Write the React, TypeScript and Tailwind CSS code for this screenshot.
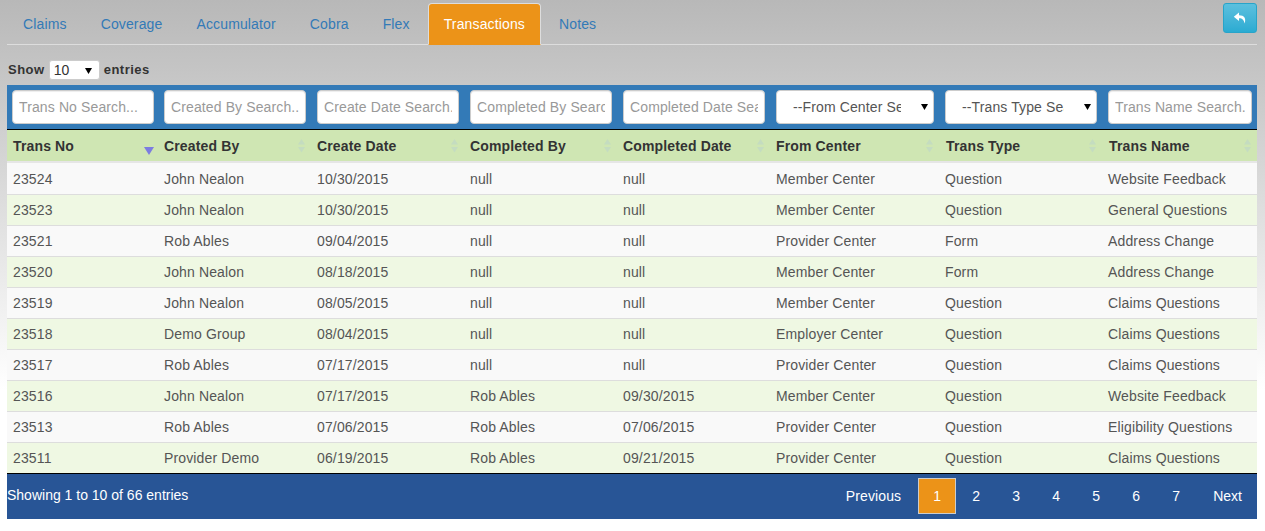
const columns = [
  { label: "Trans No", width: 151 },
  { label: "Created By", width: 153 },
  { label: "Create Date", width: 153 },
  { label: "Completed By", width: 153 },
  { label: "Completed Date", width: 153 },
  { label: "From Center", width: 169 },
  { label: "Trans Type", width: 163 },
  { label: "Trans Name", width: 155 },
];

const rows = [
  ["23524", "John Nealon", "10/30/2015", "null", "null", "Member Center", "Question", "Website Feedback"],
  ["23523", "John Nealon", "10/30/2015", "null", "null", "Member Center", "Question", "General Questions"],
  ["23521", "Rob Ables", "09/04/2015", "null", "null", "Provider Center", "Form", "Address Change"],
  ["23520", "John Nealon", "08/18/2015", "null", "null", "Member Center", "Form", "Address Change"],
  ["23519", "John Nealon", "08/05/2015", "null", "null", "Member Center", "Question", "Claims Questions"],
  ["23518", "Demo Group", "08/04/2015", "null", "null", "Employer Center", "Question", "Claims Questions"],
  ["23517", "Rob Ables", "07/17/2015", "null", "null", "Provider Center", "Question", "Claims Questions"],
  ["23516", "John Nealon", "07/17/2015", "Rob Ables", "09/30/2015", "Member Center", "Question", "Website Feedback"],
  ["23513", "Rob Ables", "07/06/2015", "Rob Ables", "07/06/2015", "Provider Center", "Question", "Eligibility Questions"],
  ["23511", "Provider Demo", "06/19/2015", "Rob Ables", "09/21/2015", "Provider Center", "Question", "Claims Questions"],
];

const tabs = ["Claims", "Coverage", "Accumulator", "Cobra", "Flex", "Transactions", "Notes"];

function Arrow({ className }: { className: string }) {
  return (
    <svg viewBox="0 0 7 6" className={className} aria-hidden="true">
      <path d="M0 0H7L3.5 6Z" fill="currentColor" />
    </svg>
  );
}

function SortIcon({ active }: { active: boolean }) {
  if (active) {
    return (
      <svg viewBox="0 0 10 8" className="absolute left-[137px] top-[17px] h-[8px] w-[10px] text-[#7c7ce0]" aria-hidden="true">
        <path d="M0 0H10L5 8Z" fill="currentColor" />
      </svg>
    );
  }
  return (
    <svg viewBox="0 0 7 14" className="absolute right-[6px] top-[9px] h-[14px] w-[7px] text-[#c4dcc0]" aria-hidden="true">
      <path d="M3.5 0L7 5.5H0Z M0 8H7L3.5 13.5Z" fill="currentColor" />
    </svg>
  );
}

const inputClass =
  "h-[34px] rounded-[4px] border border-[#ccc] bg-white px-[6px] text-[14px] tracking-[0.12px] text-[#555] outline-none placeholder:text-[#999] shadow-[inset_0_1px_1px_rgba(0,0,0,0.075)]";

function FilterInput({ placeholder, className }: { placeholder: string; className: string }) {
  return <input type="text" placeholder={placeholder} className={`${inputClass} ${className}`} />;
}

function FilterSelect({ label, className }: { label: string; className: string }) {
  return (
    <div className={`relative ${className}`}>
      <select className="h-[34px] w-full appearance-none rounded-[4px] border border-[#ccc] bg-white pl-[16px] pr-[32px] text-[14px] tracking-[0.12px] text-[#555] outline-none">
        <option>{label}</option>
      </select>
      <Arrow className="pointer-events-none absolute right-[6px] top-[14px] h-[6px] w-[7px] text-black" />
    </div>
  );
}

export default function App() {
  return (
    <div className="relative min-h-[531px] bg-[linear-gradient(to_bottom,#b8b8b8,#ffffff_390px)] font-['Liberation_Sans',Arial,sans-serif] text-[14px] text-[#555]">
      <div className="pl-[7px] pr-[8px] pt-[3px]">
        <ul className="flex h-[42px] border-b border-[#ddd]">
          {tabs.map((t) => (
            <li key={t} className="mr-[2px]">
              <a
                className={
                  t === "Transactions"
                    ? "block h-[42px] rounded-t-[4px] border border-[#ddd] border-b-transparent bg-[#ec9318] px-[15px] py-[10px] leading-[20px] tracking-[0.14px] text-white"
                    : "block h-[42px] border border-transparent px-[15px] py-[10px] leading-[20px] tracking-[0.14px] text-[#337ab7]"
                }
              >
                {t}
              </a>
            </li>
          ))}
        </ul>
        <div className="flex h-[40px] items-start pl-[1px] pt-[15px] text-[13px] font-bold leading-[20px] tracking-[0.5px] text-[#333]">
          <span>Show</span>
          <div className="relative ml-[4px] mr-[4px]">
            <select className="h-[20px] w-[51px] appearance-none rounded-[3px] border border-[#ccc] bg-white pl-[4px] text-[14px] font-normal leading-[18px] tracking-normal text-[#333] outline-none">
              <option>10</option>
            </select>
            <Arrow className="pointer-events-none absolute right-[8px] top-[8px] h-[6px] w-[7px] text-black" />
          </div>
          <span>entries</span>
        </div>
      </div>

      <div className="absolute right-[8px] top-[3px]">
        <button className="flex h-[30px] w-[34px] items-center justify-center rounded-[3px] border border-[#28a4c9] bg-gradient-to-b from-[#5bc0de] to-[#2aabd2]">
          <svg viewBox="0 0 14 12" className="h-[12px] w-[14px]" aria-hidden="true">
            <path d="M6 0.5L0.8 4.8L6 9V6.2C8.8 6 10.8 7.2 11.6 11.5C13.4 6.6 11.4 3.2 6 3.2Z" fill="white" />
          </svg>
        </button>
      </div>

      <div className="ml-[7px] mr-[8px]">
        <div className="flex h-[45px] items-start border-b border-black bg-[#337ab7] pl-[5px] pr-[5px] pt-[5px]">
          <FilterInput placeholder="Trans No Search..." className="mr-[10px] w-[142px]" />
          <FilterInput placeholder="Created By Search..." className="mr-[11px] w-[142px]" />
          <FilterInput placeholder="Create Date Search..." className="mr-[11px] w-[142px]" />
          <FilterInput placeholder="Completed By Search..." className="mr-[11px] w-[142px]" />
          <FilterInput placeholder="Completed Date Search..." className="mr-[11px] w-[142px]" />
          <FilterSelect label="--From Center Search--" className="mr-[11px] w-[158px]" />
          <FilterSelect label="--Trans Type Search--" className="mr-[11px] w-[152px]" />
          <FilterInput placeholder="Trans Name Search..." className="w-[144px]" />
        </div>

        <table className="w-[1250px] table-fixed border-collapse">
          <colgroup>
            {columns.map((c) => (
              <col key={c.label} style={{ width: c.width }} />
            ))}
          </colgroup>
          <thead>
            <tr className="h-[33px]">
              {columns.map((c, i) => (
                <th
                  key={c.label}
                  className={`relative bg-[#cfe6b3] bg-clip-padding pb-[1px] pr-[6px] text-left text-[14px] font-bold tracking-[0.14px] text-[#333] shadow-[inset_0_-2px_0_#e6e6e6] ${i >= 6 ? "pl-[7px]" : "pl-[6px]"}`}
                >
                  {c.label}
                  <SortIcon active={i === 0} />
                </th>
              ))}
            </tr>
          </thead>
          <tbody>
            {rows.map((r, i) => (
              <tr
                key={r[0]}
                className={`h-[31px] ${i % 2 === 0 ? "bg-[#f9f9f9]" : "bg-[#eff8e3]"} ${i === rows.length - 1 ? "border-b border-black" : "border-b border-[#ddd]"}`}
              >
                {r.map((cell, j) => (
                  <td key={j} className="whitespace-nowrap px-[6px] pt-[2px] text-[14px] tracking-[0.14px] text-[#555]">
                    {cell}
                  </td>
                ))}
              </tr>
            ))}
          </tbody>
        </table>

        <div className="flex h-[45px] items-center justify-between bg-[#285596] text-[14px] text-white">
          <span className="-mt-[2px]">Showing 1 to 10 of 66 entries</span>
          <div className="flex items-center">
            <a className="pr-[17px] tracking-[0.12px]">Previous</a>
            <a className="flex h-[36px] w-[38px] items-center justify-center border border-[#ccc] bg-[#ec9318]">1</a>
            {["2", "3", "4", "5", "6", "7"].map((n) => (
              <a key={n} className="w-[40px] text-center">{n}</a>
            ))}
            <a className="pl-[17px] pr-[15px]">Next</a>
          </div>
        </div>
      </div>
    </div>
  );
}
